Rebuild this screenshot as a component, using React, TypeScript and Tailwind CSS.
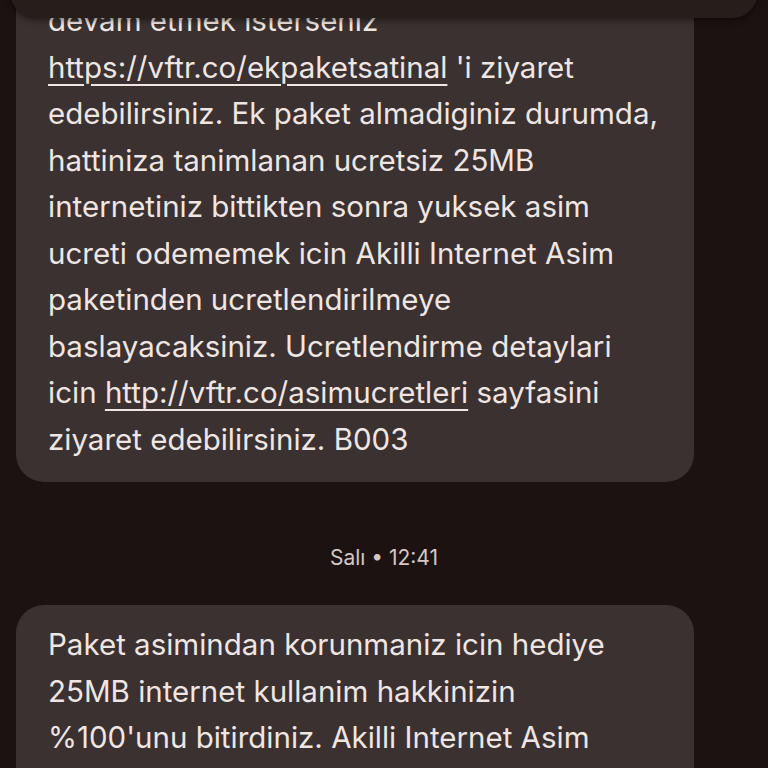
const first = [
  <>devam etmek isterseniz</>,
  <>
    <span className="underline decoration-2 underline-offset-[6px]">
      https://vftr.co/ekpaketsatinal
    </span>{" "}
    'i ziyaret
  </>,
  <>edebilirsiniz. Ek paket almadiginiz durumda,</>,
  <>hattiniza tanimlanan ucretsiz 25MB</>,
  <>internetiniz bittikten sonra yuksek asim</>,
  <>ucreti odememek icin Akilli Internet Asim</>,
  <>paketinden ucretlendirilmeye</>,
  <>baslayacaksiniz. Ucretlendirme detaylari</>,
  <>
    icin{" "}
    <span className="underline decoration-2 underline-offset-[6px]">
      http://vftr.co/asimucretleri
    </span>{" "}
    sayfasini
  </>,
  <>ziyaret edebilirsiniz. B003</>,
];

const second = [
  "Paket asimindan korunmaniz icin hediye",
  "25MB internet kullanim hakkinizin",
  "%100'unu bitirdiniz. Akilli Internet Asim",
  "paketinden ucretlendirilmeye",
];

export default function App() {
  const font = { fontFamily: "Inter, Roboto, 'Noto Sans', sans-serif" };
  return (
    <div
      className="relative h-[768px] w-[768px] overflow-hidden bg-[#1c1211] text-[#efe6e4]"
      style={font}
    >
      <div className="absolute left-[10px] right-[10px] top-[-40px] z-10 h-[58px] rounded-b-[26px] bg-[#271d1b] shadow-[0_2px_6px_rgba(0,0,0,0.5)]" />

      <div className="mt-[-21px] flex flex-col">
        <div className="ml-4 w-[678px] rounded-[28px] bg-[#3a3130] px-8 pb-[20px] pt-[18px] text-[29.5px] leading-[46.5px]">
          {first.map((line, i) => (
            <div key={i} className="whitespace-nowrap">
              {line}
            </div>
          ))}
        </div>

        <div className="mt-[62px] text-center text-[21px] leading-[28px] text-[#d4c7c4]">
          Salı • 12:41
        </div>

        <div className="ml-4 mt-[33px] w-[678px] rounded-[28px] bg-[#3a3130] px-8 py-[16px] text-[29.5px] leading-[46.5px]">
          {second.map((line, i) => (
            <div key={i} className="whitespace-nowrap">
              {line}
            </div>
          ))}
        </div>
      </div>
    </div>
  );
}
